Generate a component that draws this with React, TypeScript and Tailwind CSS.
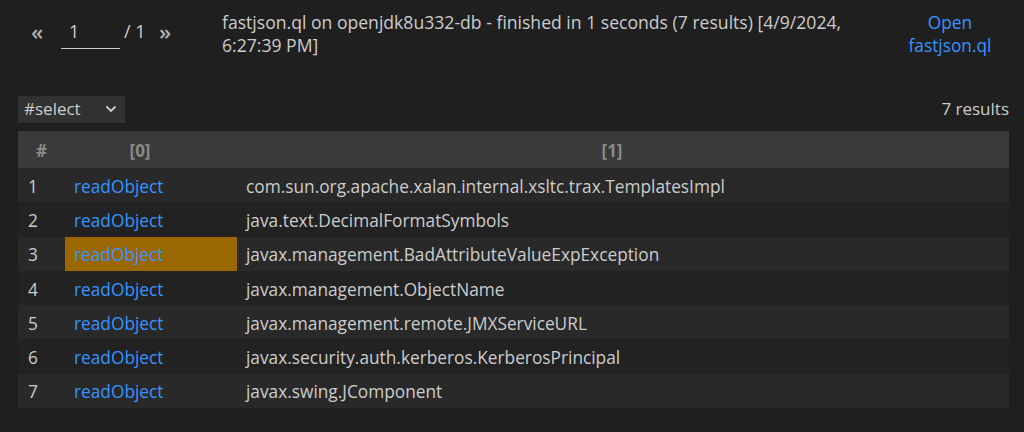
import React from "react";

const rows = [
  "com.sun.org.apache.xalan.internal.xsltc.trax.TemplatesImpl",
  "java.text.DecimalFormatSymbols",
  "javax.management.BadAttributeValueExpException",
  "javax.management.ObjectName",
  "javax.management.remote.JMXServiceURL",
  "javax.security.auth.kerberos.KerberosPrincipal",
  "javax.swing.JComponent",
];

export default function App() {
  return (
    <div
      className="w-full h-[432px] bg-[#1f1f1f] text-[#cccccc] overflow-hidden"
      style={{ fontFamily: '"Open Sans", "Noto Sans", sans-serif' }}
    >
      <div className="flex h-[91px] pt-[10px]">
        <div className="flex items-start w-[222px] pl-[31px] pt-[9px] text-[18px] leading-[24px]">
          <span className="text-[#b0b0b0] text-[22px] leading-[24px] font-semibold w-[30px]">«</span>
          <div className="w-[59px] border-b border-[#cccccc] h-[30px] pl-[8px] text-[#cccccc]">1</div>
          <span className="ml-[4px] w-[35px]">/ 1</span>
          <span className="text-[#b0b0b0] text-[22px] leading-[24px] font-semibold">»</span>
        </div>
        <div className="w-[660px] text-[17.6px] leading-[23px] pt-[1px]">
          fastjson.ql on openjdk8u332-db - finished in 1 seconds (7 results) [4/9/2024, 6:27:39 PM]
        </div>
        <div className="flex-1 flex flex-col items-center pr-[6px] pt-[1px] text-[#3794ff] text-[17.3px] leading-[23px]">
          <span>Open</span>
          <span>fastjson.ql</span>
        </div>
      </div>
      <div className="flex items-center justify-between px-[18px] pr-[15px] h-[36px]">
        <div className="flex items-center justify-between w-[107px] h-[27px] bg-[#313131] pl-[6px] pr-[8px] text-[17px]">
          <span>#select</span>
          <svg width="12" height="8" viewBox="0 0 12 8" fill="none">
            <path d="M1.5 1.5 L6 6 L10.5 1.5" stroke="#cccccc" strokeWidth="1.8" />
          </svg>
        </div>
        <span className="text-[17px]">7 results</span>
      </div>
      <div className="mx-[18px] mr-[15px] mt-[4px]">
        <div className="flex h-[37px] bg-[#3a3a3a] items-center pt-[2px] text-[#8a8a8a] font-bold text-[17px]">
          <div className="w-[47px] text-center">#</div>
          <div className="w-[172px] text-center pr-[22px]">[0]</div>
          <div className="flex-1 text-center pr-[22px]">[1]</div>
        </div>
        {rows.map((r, i) => (
          <div
            key={i}
            className={`flex h-[34.3px] items-stretch text-[17.3px] ${i % 2 === 0 ? "bg-[#292929]" : "bg-[#222222]"}`}
          >
            <div className="w-[47px] pl-[10px] pt-[3px] flex items-center">{i + 1}</div>
            <div
              className={`w-[172px] pl-[9px] pt-[3px] flex items-center text-[#3794ff] ${i === 2 ? "bg-[#9a6700]" : ""}`}
            >
              readObject
            </div>
            <div className="flex-1 pl-[9px] pt-[3px] flex items-center">{r}</div>
          </div>
        ))}
      </div>
    </div>
  );
}
